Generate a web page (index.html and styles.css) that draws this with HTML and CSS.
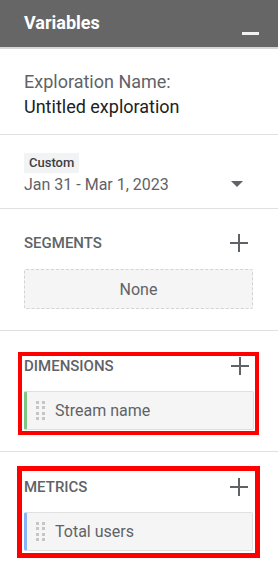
FILE: index.html
```html
<!DOCTYPE html>
<html>
<head>
<meta charset="utf-8">
<link rel="stylesheet" href="styles.css">
</head>
<body>
<div class="panel">
  <div class="header">
    <span class="title">Variables</span>
    <span class="minimize"></span>
  </div>

  <div class="section name-sec">
    <div class="label">Exploration Name:</div>
    <div class="name">Untitled exploration</div>
  </div>

  <div class="section date-sec">
    <span class="chip">Custom</span>
    <div class="date-row">
      <span class="date">Jan 31 - Mar 1, 2023</span>
      <span class="caret"></span>
    </div>
  </div>

  <div class="section seg-sec">
    <div class="row">
      <span class="heading">SEGMENTS</span>
      <svg class="plus" width="18" height="18" viewBox="0 0 18 18"><rect x="0" y="8" width="18" height="2" fill="#5f6368"/><rect x="8" y="0" width="2" height="18" fill="#5f6368"/></svg>
    </div>
    <div class="none-box">None</div>
  </div>

  <div class="section dim-sec">
    <div class="hl hl-dim">
      <div class="row row-sm">
        <span class="heading">DIMENSIONS</span>
        <svg class="plus" width="18" height="18" viewBox="0 0 18 18"><rect x="0" y="8" width="18" height="2" fill="#5f6368"/><rect x="8" y="0" width="2" height="18" fill="#5f6368"/></svg>
      </div>
      <div class="item item-green">
        <svg class="dots" width="9" height="20" viewBox="0 0 9 20"><g fill="#c6c6c6"><rect x="0" y="0" width="3" height="3"/><rect x="6" y="0" width="3" height="3"/><rect x="0" y="5" width="3" height="3"/><rect x="6" y="5" width="3" height="3"/><rect x="0" y="11" width="3" height="3"/><rect x="6" y="11" width="3" height="3"/><rect x="0" y="16" width="3" height="3"/><rect x="6" y="16" width="3" height="3"/></g></svg>
        <span>Stream name</span>
      </div>
    </div>
  </div>

  <div class="met-sec">
    <div class="hl hl-met">
      <div class="row row-sm">
        <span class="heading">METRICS</span>
        <svg class="plus" width="18" height="18" viewBox="0 0 18 18"><rect x="0" y="8" width="18" height="2" fill="#5f6368"/><rect x="8" y="0" width="2" height="18" fill="#5f6368"/></svg>
      </div>
      <div class="item item-blue">
        <svg class="dots" width="9" height="20" viewBox="0 0 9 20"><g fill="#c6c6c6"><rect x="0" y="0" width="3" height="3"/><rect x="6" y="0" width="3" height="3"/><rect x="0" y="5" width="3" height="3"/><rect x="6" y="5" width="3" height="3"/><rect x="0" y="11" width="3" height="3"/><rect x="6" y="11" width="3" height="3"/><rect x="0" y="16" width="3" height="3"/><rect x="6" y="16" width="3" height="3"/></g></svg>
        <span>Total users</span>
      </div>
    </div>
  </div>
</div>
</body>
</html>
```

FILE: styles.css
```css
* { box-sizing: border-box; }
html, body { margin: 0; padding: 0; background: #fff; }
body { font-family: Roboto, "Liberation Sans", sans-serif; color: #5f6368; }
.panel { width: 278px; }

.header {
  height: 49px;
  background: #666666;
  border-bottom: 2px solid #d6d6d6;
  display: flex;
  justify-content: space-between;
  align-items: flex-start;
  padding: 11px 19px 0 24px;
}
.title { color: #fff; font-weight: 700; font-size: 18px; line-height: 24px; }
.minimize { width: 17px; height: 3px; background: #f1f1f1; margin-top: 21px; }

.section { border-bottom: 1px solid #e0e0e0; padding: 0 25px 0 24px; }

.name-sec { padding-top: 20px; padding-bottom: 15px; }
.label, .name { font-size: 18px; line-height: 25px; }
.name { color: #202124; }

.date-sec { padding-top: 18px; padding-bottom: 11px; padding-right: 35px; }
.chip {
  display: inline-block;
  height: 20px;
  line-height: 20px;
  padding: 0 5px;
  background: #f1f3f4;
  color: #3c4043;
  font-size: 13px;
  font-weight: 500;
  vertical-align: top;
}
.date-row { display: flex; justify-content: space-between; align-items: flex-start; }
.date { font-size: 16px; line-height: 24px; }
.caret {
  width: 0; height: 0;
  border-left: 6px solid transparent;
  border-right: 6px solid transparent;
  border-top: 6px solid #5f6368;
  margin-top: 8px;
}

.seg-sec { padding-top: 22px; padding-bottom: 21px; }
.row {
  display: flex;
  justify-content: space-between;
  align-items: center;
  height: 24px;
  padding-right: 5px;
}
.row-sm { height: 20px; }
.heading { font-size: 15px; font-weight: 500; color: #5f6368; }
.plus { display: block; }
.none-box {
  margin-top: 14px;
  height: 40px;
  border: 1px dashed #d3d3d3;
  background: #f5f5f5;
  border-radius: 2px;
  display: flex;
  align-items: center;
  justify-content: center;
  font-size: 16px;
}

.dim-sec { padding: 21px 0 16px 0; }
.met-sec { padding: 14px 0 0 0; }
.hl { border-style: solid; border-color: #ff0000; }
.hl-dim { margin-left: 18px; width: 241px; border-width: 4px; padding: 0 1px 1px 2px; }
.hl-met { margin-left: 17px; width: 243px; border-width: 5px; padding: 6px 2px 2px 2px; }

.item {
  margin-top: 15px;
  height: 39px;
  background: #f5f5f5;
  border: 1px solid #e0e0e0;
  border-radius: 2px;
  display: flex;
  align-items: center;
  padding-left: 9px;
  font-size: 16px;
  color: #5f6368;
}
.item-green { border-left: 3px solid #81c784; }
.item-blue { border-left: 3px solid #8ab4f8; }
.dots { margin-right: 10px; display: block; }
```
